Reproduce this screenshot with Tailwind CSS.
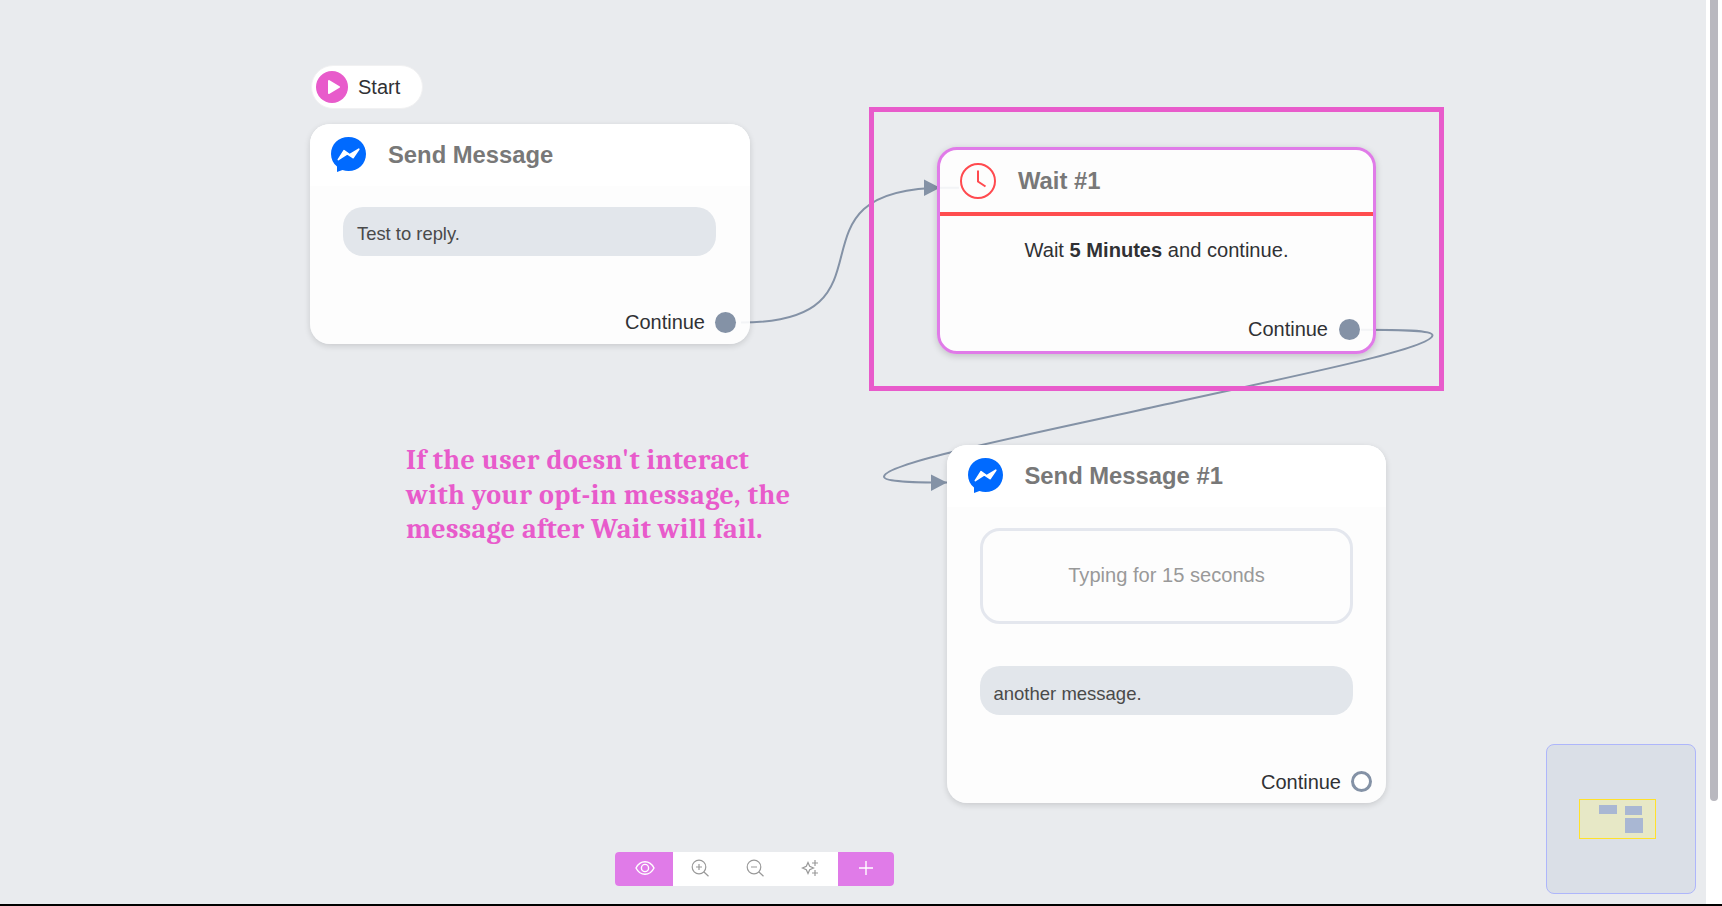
<!DOCTYPE html>
<html lang="en">
<head>
    <meta charset="UTF-8">
    <meta name="viewport" content="width=device-width, initial-scale=1.0">
    <title>Flow Builder</title>
    <script src="https://cdn.jsdelivr.net/npm/@tailwindcss/browser@4"></script>
</head>
<body class="h-screen overflow-hidden flex flex-col bg-white text-[#303134] text-xl leading-6 font-['Liberation_Sans',Arial,sans-serif]">

    <div class="flex flex-1 min-h-0">
        <!-- Canvas -->
        <main class="relative flex-1 bg-[#e9ebee] overflow-hidden">

            <!-- Connections -->
            <svg class="absolute inset-0 w-full h-full" fill="none" stroke="#8492a6" stroke-width="2">
                <path d="M741 322.6C909 322.6 773 187.7 945 187.7H959"/>
                <path d="M924 179.5L940 187.7L924 196Z" fill="#8492a6" stroke="none"/>
                <path d="M1361 329.7C1400 329.7 1432.5 330 1432.5 335.3C1432.5 349 1288 377 1158 406C1028 435 884 463 884 476.7C884 482 916 482.6 956 482.6"/>
                <path d="M931 474.5L947 482.6L931 491Z" fill="#8492a6" stroke="none"/>
            </svg>

            <!-- Start -->
            <div class="absolute left-[311px] top-[65px] w-[112px] h-[44px] rounded-full bg-white border border-[#f1f1f2] flex items-center gap-2.5 pl-1">
                <svg class="w-8 h-8" viewBox="0 0 32 32">
                    <circle cx="16" cy="16" r="16" fill="#e85bcb"/>
                    <path d="M13 10L23 16L13 22Z" fill="#fff" stroke="#fff" stroke-width="2" stroke-linejoin="round"/>
                </svg>
                <span>Start</span>
            </div>

            <!-- Send Message -->
            <section class="absolute left-[310px] top-[124px] w-[440px] h-[220px] rounded-[20px] overflow-hidden bg-white/90 shadow-[0_2px_6px_rgba(0,0,0,0.14)] flex flex-col">
                <header class="h-[62px] bg-white flex items-center gap-[22px] pl-[21px]">
                    <svg class="w-[35px] h-[35px] -mt-px" viewBox="0 0 35 35">
                        <path d="M17.5 0C7.6 0 0 7.2 0 17C0 22 2.2 26.3 6 29.5V35L11.5 33C13.4 33.7 15.4 34 17.5 34C27.4 34 35 26.8 35 17C35 7.2 27.400 0 17.5 0Z" fill="#006aff"/>
                        <path d="M7.300 22.600L13 13.600L18.600 17.600L27.800 12.200L22 20.700L16.300 16.800Z" fill="#fff" stroke="#fff" stroke-width="1.600" stroke-linejoin="round"/>
                    </svg>
                    <h2 class="text-[23.8px] leading-7 font-bold text-[#787878]">Send Message</h2>
                </header>
                <div class="mx-[33px] w-[373px] mt-[21px] h-[49px] rounded-[20px] bg-[#e2e6eb] pl-3.5 pt-[17px] text-[18.4px] leading-5 text-[#4a4a4a]">Test to reply.</div>
                <footer class="mt-auto h-[43px] flex items-center justify-end gap-2.5 pr-[14px]">
                    <span class="-mt-0.5">Continue</span>
                    <span class="w-[21px] h-[21px] rounded-full bg-[#8492a6]"></span>
                </footer>
            </section>

            <!-- Wait #1 -->
            <section class="absolute left-[937px] top-[147px] w-[439px] h-[207px] rounded-[20px] border-3 border-[#e07be8] bg-white/90 shadow-[0_2px_7px_rgba(0,0,0,0.18)] flex flex-col">
                <header class="h-[66px] border-b-4 border-[#ff4d4f] flex items-center gap-[22px] pl-5">
                    <svg class="w-9 h-9" viewBox="0 0 36 36" fill="none" stroke="#ff4a4f" stroke-width="2">
                        <circle cx="18" cy="18" r="17"/>
                        <path d="M18 7.5V18.5L25.5 23.5"/>
                    </svg>
                    <h2 class="text-[23.8px] leading-7 font-bold text-[#787878]">Wait #1</h2>
                </header>
                <p class="mt-[22px] text-center text-[20.1px]">Wait <b>5 Minutes</b> and continue.</p>
                <footer class="mt-auto h-[43px] flex items-center justify-end gap-[11px] pr-[13px]">
                    <span class="-mt-px">Continue</span>
                    <span class="w-[21px] h-[21px] rounded-full bg-[#8492a6]"></span>
                </footer>
            </section>

            <!-- Send Message #1 -->
            <section class="absolute left-[947px] top-[445px] w-[439px] h-[358px] rounded-[20px] overflow-hidden bg-white/90 shadow-[0_2px_6px_rgba(0,0,0,0.14)] flex flex-col">
                <header class="h-[62px] bg-white flex items-center gap-[22px] pl-[20.5px]">
                    <svg class="w-[35px] h-[35px] -mt-px" viewBox="0 0 35 35">
                        <path d="M17.5 0C7.6 0 0 7.2 0 17C0 22 2.2 26.3 6 29.5V35L11.5 33C13.4 33.7 15.4 34 17.5 34C27.4 34 35 26.8 35 17C35 7.2 27.400 0 17.5 0Z" fill="#006aff"/>
                        <path d="M7.300 22.600L13 13.600L18.600 17.600L27.800 12.200L22 20.700L16.300 16.800Z" fill="#fff" stroke="#fff" stroke-width="1.600" stroke-linejoin="round"/>
                    </svg>
                    <h2 class="text-[23.8px] leading-7 font-bold text-[#787878]">Send Message #1</h2>
                </header>
                <div class="mx-[33px] mt-[21px] h-[96px] rounded-[20px] border-3 border-[#e4e7ee] flex items-center justify-center pb-0.5 text-[20.1px] text-[#999]">Typing for 15 seconds</div>
                <div class="mx-[33px] mt-[42px] h-[49px] rounded-[20px] bg-[#e2e6eb] pl-[13.5px] pt-[18px] text-[18.5px] leading-5 text-[#4a4a4a]">another message.</div>
                <footer class="mt-auto h-[43px] flex items-center justify-end gap-2.5 pr-[14px]">
                    <span>Continue</span>
                    <span class="w-[21px] h-[21px] rounded-full border-3 border-[#8492a6] bg-white"></span>
                </footer>
            </section>

            <!-- Annotation -->
            <div class="absolute left-[869px] top-[107px] w-[575px] h-[284px] border-5 border-[#e85bcb]"></div>
            <p class="absolute left-[406px] top-[443px] text-[28px] leading-[34.5px] font-bold text-[#e85bcb] whitespace-nowrap font-[Cambria,Caladea,'Liberation_Serif',serif]">
                <span class="block tracking-[0.38px]">If the user doesn't interact</span>
                <span class="block tracking-[0.48px]">with your opt-in message, the</span>
                <span class="block tracking-[0.32px]">message after Wait will fail.</span>
            </p>

            <!-- Toolbar -->
            <div class="absolute left-[614.5px] top-[852px] w-[279.5px] h-[34px] rounded overflow-hidden bg-white flex text-[#999]">
                <button class="w-[58px] bg-[#e07be8] text-white flex items-center justify-center pl-0.5 pb-0.5">
                    <svg class="w-5 h-5" viewBox="0 0 20 20" fill="none" stroke="currentColor" stroke-width="1.4">
                        <path d="M1 10C3 6 6.2 3.700 10 3.700S17 6 19 10C17 14 13.8 16.300 10 16.300S3 14 1 10Z"/>
                        <circle cx="10" cy="10" r="3.6"/>
                    </svg>
                </button>
                <button class="w-[55px] flex items-center justify-center pb-0.5">
                    <svg class="w-[18px] h-[18px]" viewBox="0 0 18 18" fill="none" stroke="currentColor" stroke-width="1.2">
                        <circle cx="8" cy="8" r="6.8"/>
                        <path d="M12.7 12.7L17.5 17.3M8 5V11M5 8H11"/>
                    </svg>
                </button>
                <button class="w-[55px] flex items-center justify-center pb-0.5">
                    <svg class="w-[18px] h-[18px]" viewBox="0 0 18 18" fill="none" stroke="currentColor" stroke-width="1.2">
                        <circle cx="8" cy="8" r="6.8"/>
                        <path d="M12.7 12.7L17.5 17.3M5 8H11"/>
                    </svg>
                </button>
                <button class="w-[55px] flex items-center justify-center pb-0.5">
                    <svg class="w-[18px] h-[18px]" viewBox="0 0 18 18" fill="none" stroke="currentColor" stroke-width="1.2">
                        <path d="M7 3.500L8.700 7.300L12.500 9L8.700 10.700L7 14.500L5.300 10.700L1.500 9L5.300 7.300Z"/>
                        <path d="M14 1V7M11 4H17M14 11V17M11 14H17"/>
                    </svg>
                </button>
                <button class="flex-1 bg-[#e07be8] text-white flex items-center justify-center pb-0.5">
                    <svg class="w-3.5 h-3.5" viewBox="0 0 14 14" stroke="currentColor" stroke-width="1.4">
                        <path d="M7 0V14M0 7H14"/>
                    </svg>
                </button>
            </div>

            <!-- Minimap -->
            <div class="absolute left-[1546px] top-[744px] w-[150px] h-[150px] rounded-lg border border-[#aeb6fb] bg-[#dadfe7]">
                <svg class="w-full h-full" viewBox="1 1 148 148">
                    <rect x="33.5" y="55.5" width="76" height="39" fill="#e7e8c6" stroke="#ffe12b"/>
                    <path d="M53 61H71V70H53ZM79 62H96V71H79ZM79 74H97V89H79Z" fill="#a9b7d3"/>
                </svg>
            </div>
        </main>

        <!-- Scrollbar -->
        <div class="w-4 bg-white px-1">
            <div class="h-[801px] rounded-b-full bg-[#b9b8bf]"></div>
        </div>
    </div>
    <div class="h-0.5 bg-black"></div>
</body>
</html>
